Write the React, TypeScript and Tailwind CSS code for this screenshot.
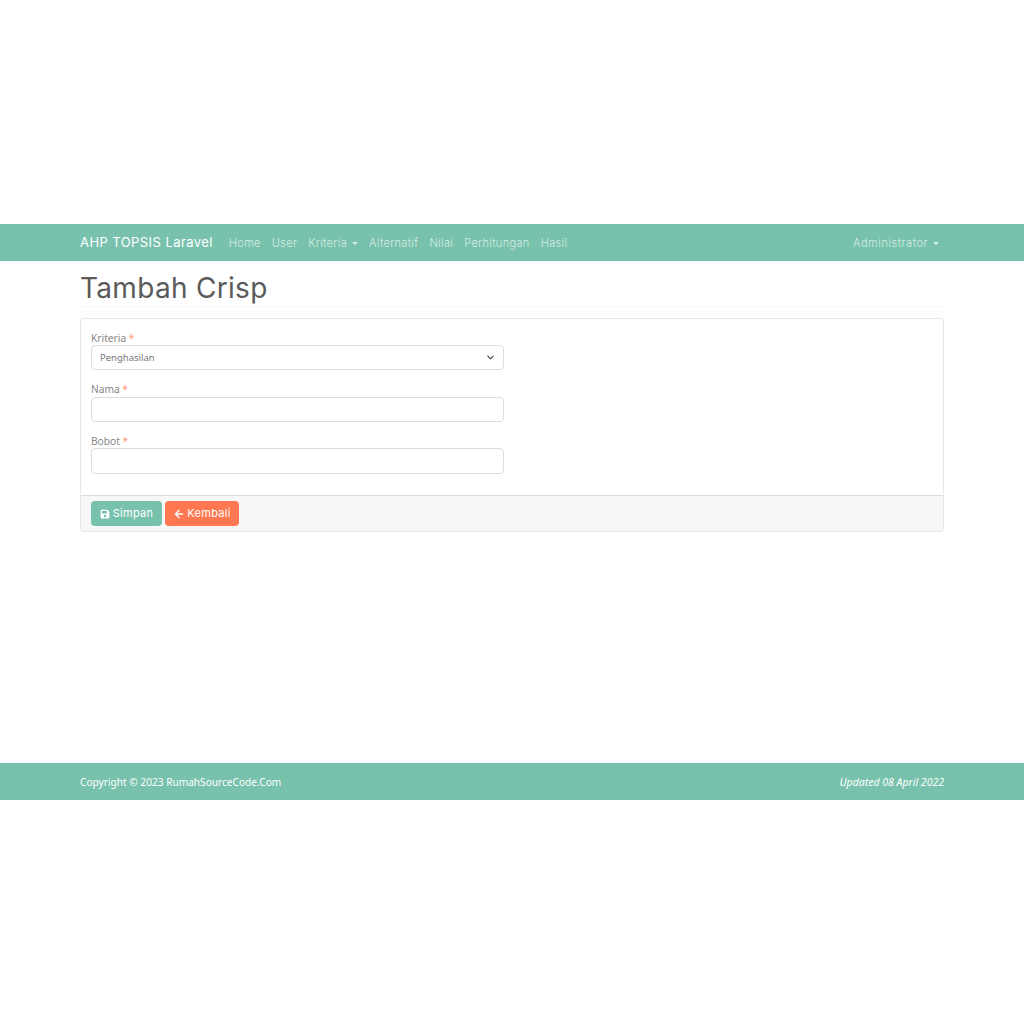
import { ArrowLeft, ChevronDown } from 'lucide-react'

const montserrat = "font-['Inter','Noto_Sans',sans-serif]"
const navLinks = ['Home', 'User', 'Kriteria', 'Alternatif', 'Nilai', 'Perhitungan', 'Hasil']

function Caret() {
  return <span className="ml-[5px] inline-block h-0 w-0 border-x-[3.5px] border-t-[3.5px] border-x-transparent border-t-current align-middle" />
}

function Label({ text, first }: { text: string; first?: boolean }) {
  return (
    <label className={`block h-4 text-[10.2px] leading-[16px] text-[#888] ${first ? 'pt-px' : ''}`}>
      {text} <span className="text-[#ff9a7d]">*</span>
    </label>
  )
}

function SaveIcon() {
  return (
    <svg width="10" height="10" viewBox="0 0 448 512" fill="currentColor" className="mr-[3px]">
      <path d="M433.9 129.9l-83.9-83.9A48 48 0 0 0 316.1 32H48C21.5 32 0 53.5 0 80v352c0 26.5 21.5 48 48 48h352c26.5 0 48-21.5 48-48V163.9a48 48 0 0 0-14.1-34zM224 416c-35.3 0-64-28.7-64-64 0-35.3 28.7-64 64-64s64 28.7 64 64c0 35.3-28.7 64-64 64zm96-304.5V212c0 6.6-5.4 12-12 12H76c-6.6 0-12-5.4-12-12V108c0-6.6 5.4-12 12-12h228.5c3.2 0 6.2 1.3 8.5 3.5l3.5 3.5c2.3 2.3 3.5 5.3 3.5 8.5z" />
    </svg>
  )
}

export default function App() {
  return (
    <div className="flex h-screen flex-col justify-center bg-white font-['Noto_Sans',sans-serif]">
      <nav className="bg-[#78c2ad]">
        <div className={`mx-auto flex h-[37px] w-[864px] items-center ${montserrat}`}>
          <span className="mr-4 text-[13px] tracking-[0.43px] text-white">AHP TOPSIS Laravel</span>
          <ul className="flex gap-[11px] pt-px text-[11px] font-light tracking-[0.34px] text-white/70">
            {navLinks.map((link) => (
              <li key={link} className="flex items-center">
                {link}
                {link === 'Kriteria' && <Caret />}
              </li>
            ))}
          </ul>
          <div className="mr-[5px] ml-auto flex items-center pt-px text-[11px] font-light tracking-[0.55px] text-white/70">
            Administrator
            <Caret />
          </div>
        </div>
      </nav>

      <main className="mx-auto h-[502px] w-[864px]">
        <div className="h-[46px] border-b border-[#f9f9f9]">
          <h1 className={`pt-[9px] text-[28px] leading-[36px] font-normal tracking-[0.3px] text-[#5a5a5a] ${montserrat}`}>Tambah Crisp</h1>
        </div>
        <div className="mt-[11px] overflow-hidden rounded-[4px] border border-[#e6e6e6]">
          <div className="h-[176px] px-[10px] pt-[10px]">
            <div className="w-[413px]">
              <Label text="Kriteria" first />
              <div className="flex h-[25px] items-center justify-between rounded-[4px] border border-[#dcdcdc] pr-[7px] pl-2 text-[9.5px] text-[#777]">
                <span className="pt-px">Penghasilan</span>
                <ChevronDown size={11} strokeWidth={2.5} className="text-[#444]" />
              </div>
              <div className="mt-[11px]">
                <Label text="Nama" />
                <input className="block h-[25px] w-full rounded-[4px] border border-[#dcdcdc]" />
              </div>
              <div className="mt-[11px]">
                <Label text="Bobot" />
                <input className="-mt-px block h-[26px] w-full rounded-[4px] border border-[#dcdcdc]" />
              </div>
            </div>
          </div>
          <div className={`flex h-[36px] items-center gap-[3px] border-t border-[#dcdcdc] bg-[#f7f7f7] px-[10px] text-[11px] tracking-[0.3px] text-white ${montserrat}`}>
            <button className="flex h-[25px] w-[71px] items-center justify-center rounded-[4px] bg-[#78c2ad]">
              <SaveIcon />
              Simpan
            </button>
            <button className="flex h-[25px] w-[74px] items-center justify-center rounded-[4px] bg-[#ff7851]">
              <ArrowLeft size={12} strokeWidth={3} className="mr-[2px]" />
              Kembali
            </button>
          </div>
        </div>
      </main>

      <footer className="bg-[#78c2ad]">
        <div className="mx-auto flex h-[37px] w-[864px] items-center justify-between pt-[2px] text-[10.15px] text-white">
          <span>Copyright © 2023 RumahSourceCode.Com</span>
          <em className="text-[10.5px]">Updated 08 April 2022</em>
        </div>
      </footer>
    </div>
  )
}
